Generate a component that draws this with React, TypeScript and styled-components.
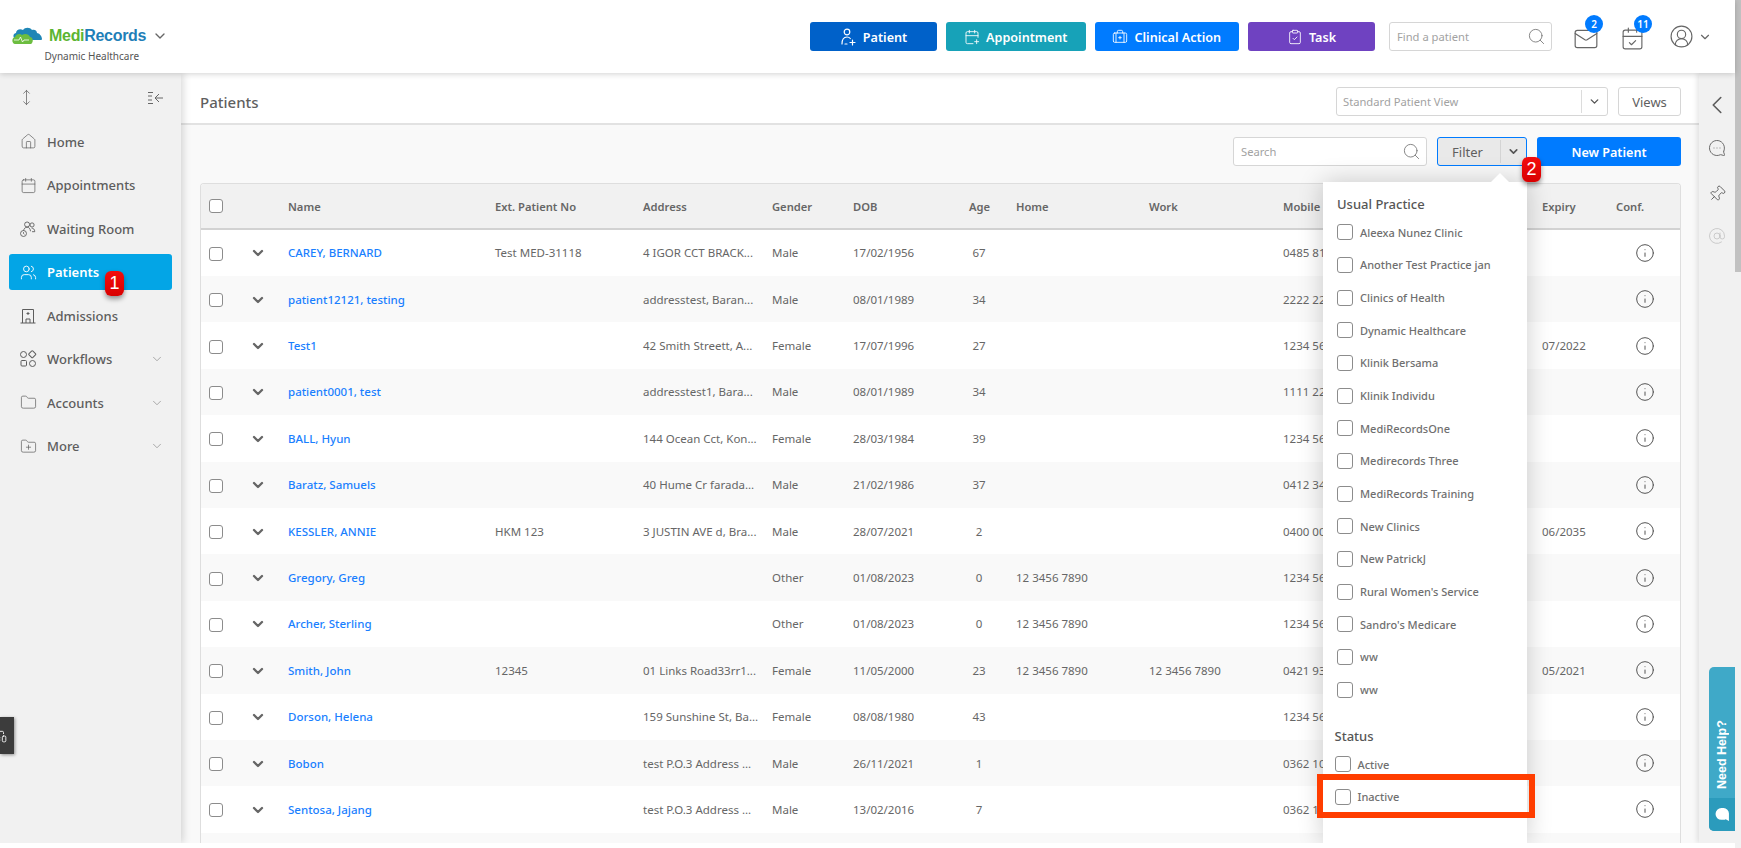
import React from 'react'
import styled, { createGlobalStyle } from 'styled-components'
import {
  AtSign,
  BriefcaseMedical,
  Calendar,
  CalendarCheck,
  CalendarPlus,
  ChevronDown,
  ChevronLeft,
  CircleUserRound,
  ClipboardCheck,
  Folder,
  FolderPlus,
  Home,
  Info,
  Mail,
  MessageCircleMore,
  MonitorSmartphone,
  MoveVertical,
  Pin,
  Search,
  Users,
} from 'lucide-react'

const GlobalStyle = createGlobalStyle`
  html, body { margin: 0; padding: 0; background: #fff; overflow: hidden; }
  body { font-family: "Noto Sans", "Open Sans", sans-serif; color: #5f5f5f; }
  * { box-sizing: border-box; }
`

const COLUMNS = '40px 39px 207px 148px 129px 81px 116px 47px 133px 134px 259px 74px 65px'

const patients = [
  ['CAREY, BERNARD', 'Test MED-31118', '4 IGOR CCT BRACK...', 'Male', '17/02/1956', '67', '', '', '0485 81', ''],
  ['patient12121, testing', '', 'addresstest, Baran...', 'Male', '08/01/1989', '34', '', '', '2222 22', ''],
  ['Test1', '', '42 Smith Streett, A...', 'Female', '17/07/1996', '27', '', '', '1234 56', '07/2022'],
  ['patient0001, test', '', 'addresstest1, Bara...', 'Male', '08/01/1989', '34', '', '', '1111 22', ''],
  ['BALL, Hyun', '', '144 Ocean Cct, Kon...', 'Female', '28/03/1984', '39', '', '', '1234 56', ''],
  ['Baratz, Samuels', '', '40 Hume Cr farada...', 'Male', '21/02/1986', '37', '', '', '0412 34', ''],
  ['KESSLER, ANNIE', 'HKM 123', '3 JUSTIN AVE d, Bra...', 'Male', '28/07/2021', '2', '', '', '0400 00', '06/2035'],
  ['Gregory, Greg', '', '', 'Other', '01/08/2023', '0', '12 3456 7890', '', '1234 56', ''],
  ['Archer, Sterling', '', '', 'Other', '01/08/2023', '0', '12 3456 7890', '', '1234 56', ''],
  ['Smith, John', '12345', '01 Links Road33rr1...', 'Female', '11/05/2000', '23', '12 3456 7890', '12 3456 7890', '0421 93', '05/2021'],
  ['Dorson, Helena', '', '159 Sunshine St, Ba...', 'Female', '08/08/1980', '43', '', '', '1234 56', ''],
  ['Bobon', '', 'test P.O.3 Address ...', 'Male', '26/11/2021', '1', '', '', '0362 10', ''],
  ['Sentosa, Jajang', '', 'test P.O.3 Address ...', 'Male', '13/02/2016', '7', '', '', '0362 1', ''],
]

const practices = [
  'Aleexa Nunez Clinic',
  'Another Test Practice jan',
  'Clinics of Health',
  'Dynamic Healthcare',
  'Klinik Bersama',
  'Klinik Individu',
  'MediRecordsOne',
  'Medirecords Three',
  'MediRecords Training',
  'New Clinics',
  'New PatrickJ',
  "Rural Women's Service",
  "Sandro's Medicare",
  'ww',
  'ww',
]

const Shell = styled.div`
  position: relative;
  display: flex;
  width: 1741px;
  height: 848px;
  overflow: hidden;
  background: #fff;
`

const Page = styled.div`
  flex: 1;
  min-width: 0;
  height: 843px;
  display: flex;
  flex-direction: column;
`

const ScrollTrack = styled.div`
  width: 6px;
  height: 848px;
  background: #f1f1f1;
`

const ScrollThumb = styled.div`
  height: 272px;
  background: #c1c1c1;
`

const Header = styled.header`
  position: relative;
  z-index: 5;
  height: 73px;
  flex: none;
  display: flex;
  align-items: center;
  padding: 0 23px 0 10px;
  background: #fff;
  box-shadow: 0 1px 6px rgba(0, 0, 0, 0.18);
`

const Brand = styled.div`
  display: flex;
  flex-direction: column;
  margin-top: 13px;
`

const BrandRow = styled.div`
  display: flex;
  align-items: center;
  height: 24px;
`

const BrandName = styled.span`
  margin-left: 6px;
  font-family: "Liberation Sans", Arial, sans-serif;
  font-size: 16px;
  font-weight: 700;
  letter-spacing: -0.3px;
  color: #1f7fb8;
  b { color: #5cb531; font-weight: 700; }
`

const BrandCaret = styled.span`
  display: flex;
  margin-left: 6px;
  color: #666;
`

const BrandSub = styled.span`
  margin: 1px 0 0 34.5px;
  font-size: 10px;
  line-height: 14px;
  color: #555;
`

const ActionGroup = styled.div`
  margin-left: auto;
  display: flex;
  gap: 9px;
`

const ActionButton = styled.button<{ $bg: string; $w: number }>`
  width: ${(p) => p.$w}px;
  height: 29px;
  display: flex;
  align-items: center;
  justify-content: center;
  gap: 6px;
  border: 0;
  border-radius: 3px;
  padding: 1px 0 0;
  background: ${(p) => p.$bg};
  color: #fff;
  font-family: inherit;
  font-size: 12.6px;
  font-weight: 600;
`

const SearchBox = styled.div<{ $w: number }>`
  width: ${(p) => p.$w}px;
  height: 29px;
  display: flex;
  align-items: center;
  justify-content: space-between;
  padding: 0 5px 0 7px;
  background: #fff;
  border: 1px solid #d6d6d6;
  border-radius: 3px;
  font-size: 11.2px;
  color: #a2a2a2;
  svg { color: #777; }
`

const FindBox = styled(SearchBox)`
  margin-left: 14px;
`

const HeaderIcon = styled.div<{ $ml: number; $badgeLeft: number }>`
  position: relative;
  display: flex;
  margin-left: ${(p) => p.$ml}px;
  margin-top: 4px;
  color: #666;
  span { left: ${(p) => p.$badgeLeft}px; }
`

const CountBadge = styled.span`
  position: absolute;
  top: -11px;
  width: 18px;
  height: 18px;
  border-radius: 50%;
  display: flex;
  align-items: center;
  justify-content: center;
  background: #007bff;
  color: #fff;
  font-size: 10px;
  font-weight: 600;
`

const UserMenu = styled.div`
  display: flex;
  align-items: center;
  gap: 4px;
  margin-left: 24px;
  color: #666;
`

const Body = styled.div`
  flex: 1;
  min-height: 0;
  display: flex;
  overflow: hidden;
`

const Sidebar = styled.aside`
  position: relative;
  z-index: 3;
  width: 181px;
  flex: none;
  padding: 0 9px;
  background: #f1f1f1;
  box-shadow: 2px 0 8px rgba(0, 0, 0, 0.16);
`

const SideTop = styled.div`
  height: 50.5px;
  display: flex;
  align-items: center;
  justify-content: space-between;
  padding: 0 8px 1px 9px;
  color: #666;
`

const SideNav = styled.nav`
  display: flex;
  flex-direction: column;
  gap: 7.5px;
`

const NavItem = styled.div<{ $active?: boolean }>`
  position: relative;
  height: 36px;
  display: flex;
  align-items: center;
  gap: 10px;
  padding: 0 8px 0 10px;
  border-radius: 3px;
  background: ${(p) => (p.$active ? '#03a5e6' : 'transparent')};
  color: ${(p) => (p.$active ? '#fff' : '#5d5d5d')};
  font-size: 13px;
  font-weight: ${(p) => (p.$active ? 600 : 500)};
`

const NavIcon = styled.span`
  width: 18px;
  flex: none;
  display: flex;
  justify-content: center;
`

const NavCaret = styled.span`
  display: flex;
  margin-left: auto;
  color: #8a8a8a;
`

const Marker = styled.span`
  position: absolute;
  z-index: 9;
  width: 19px;
  height: 25px;
  display: flex;
  align-items: center;
  justify-content: center;
  border-radius: 6px;
  background: linear-gradient(#f40d0d, #d80000);
  box-shadow: 0 3px 5px rgba(0, 0, 0, 0.4);
  color: #fff;
  font-family: "Liberation Sans", Arial, sans-serif;
  font-size: 18px;
  font-weight: 400;
`

const PatientsMarker = styled(Marker)`
  left: 96px;
  top: 17px;
`

const FilterMarker = styled(Marker)`
  left: 85px;
  top: 20px;
`

const DeviceTab = styled.div`
  position: absolute;
  left: 0;
  top: 644px;
  width: 14px;
  height: 37px;
  display: flex;
  align-items: center;
  overflow: hidden;
  background: #3c3c3c;
  box-shadow: 1px 1px 3px rgba(0, 0, 0, 0.4);
  color: #fff;
  svg { flex: none; margin-left: -7px; }
`

const Main = styled.main`
  flex: 1;
  min-width: 0;
  display: flex;
  flex-direction: column;
  background: #f9f9f9;
`

const PageHead = styled.div`
  height: 52px;
  flex: none;
  display: flex;
  align-items: center;
  padding: 7px 18px 0 19px;
  background: #fff;
  border-bottom: 2px solid #e2e2e2;
`

const PageTitle = styled.h1`
  margin: 0 auto 0 0;
  font-size: 15px;
  font-weight: 500;
  color: #5f5f5f;
`

const ViewSelect = styled.div`
  width: 272px;
  height: 29px;
  display: flex;
  align-items: center;
  border: 1px solid #d6d6d6;
  border-radius: 3px;
  background: #fff;
  font-size: 11.2px;
  color: #a2a2a2;
`

const ViewLabel = styled.span`
  flex: 1;
  padding-left: 6px;
`

const ViewCaret = styled.span`
  width: 26px;
  height: 23px;
  display: flex;
  align-items: center;
  justify-content: center;
  border-left: 1px solid #dcdcdc;
  color: #555;
`

const ViewsButton = styled.button`
  width: 63px;
  height: 29px;
  margin-left: 10px;
  padding: 0;
  border: 1px solid #d6d6d6;
  border-radius: 3px;
  background: #fff;
  color: #5f5f5f;
  font-family: inherit;
  font-size: 13px;
`

const Toolbar = styled.div`
  height: 58px;
  flex: none;
  display: flex;
  justify-content: flex-end;
  gap: 10px;
  padding: 12px 18px 0 0;
`

const FilterWrap = styled.div`
  position: relative;
  z-index: 4;
  width: 90px;
  height: 29px;
`

const FilterButton = styled.div`
  height: 29px;
  display: flex;
  align-items: center;
  border: 1px solid #007bff;
  border-radius: 3px;
  background: #e9e9e9;
  font-size: 13px;
  color: #5f5f5f;
`

const FilterLabel = styled.span`
  flex: 1;
  text-align: center;
  padding-right: 3px;
`

const FilterCaret = styled.span`
  width: 26px;
  height: 23px;
  display: flex;
  align-items: center;
  justify-content: center;
  border-left: 1px solid #d4d4d4;
  color: #555;
`

const NewButton = styled.button`
  width: 144px;
  height: 29px;
  padding: 1px 0 0;
  border: 0;
  border-radius: 3px;
  background: #007bff;
  color: #fff;
  font-family: inherit;
  font-size: 12.6px;
  font-weight: 600;
`

const Dropdown = styled.div`
  position: absolute;
  top: 45px;
  right: 0;
  width: 204px;
  height: 661px;
  padding: 11px 0 0 14px;
  background: #fff;
  box-shadow: 0 0 24px rgba(0, 0, 0, 0.2);
  &::before {
    content: '';
    position: absolute;
    top: -9px;
    left: 167px;
    border-left: 10px solid transparent;
    border-right: 10px solid transparent;
    border-bottom: 10px solid #fff;
  }
`

const GroupTitle = styled.div`
  height: 22px;
  line-height: 22px;
  margin-bottom: 1px;
  font-size: 13px;
  font-weight: 500;
  color: #565656;
`

const StatusGroup = styled.div`
  margin: 19px 0 0 -2.5px;
`

const CheckRow = styled.label`
  height: 32.67px;
  display: flex;
  align-items: center;
  gap: 7px;
  font-size: 11px;
  font-weight: 500;
  color: #6f6f6f;
`

const Box = styled.span<{ $size?: number }>`
  width: ${(p) => p.$size ?? 16}px;
  height: ${(p) => p.$size ?? 16}px;
  flex: none;
  display: block;
  background: #fff;
  border: 1.5px solid #8c8c8c;
  border-radius: 3px;
`

const RowBox = styled(Box)`
  margin-top: 2px;
`

const Highlight = styled.div`
  position: absolute;
  left: -6px;
  top: 592px;
  width: 218px;
  height: 44px;
  border: 6px solid #ff3d00;
`

const TableWrap = styled.div`
  flex: 1;
  min-height: 0;
  margin: 0 18px 0 19px;
  border: 1px solid #dedede;
  border-bottom: 0;
  border-radius: 4px 4px 0 0;
  overflow: hidden;
  background: #fff;
`

const HeadRow = styled.div`
  height: 45.6px;
  display: grid;
  grid-template-columns: ${COLUMNS};
  align-items: center;
  margin-left: -1px;
  padding: 1px 0 0 9px;
  background: #f1f1f1;
  border-bottom: 2px solid #d2d2d2;
  font-size: 11.2px;
  font-weight: 600;
  color: #666;
`

const DataRow = styled.div`
  height: 46.4px;
  display: grid;
  grid-template-columns: ${COLUMNS};
  align-items: center;
  margin-left: -1px;
  padding-left: 9px;
  background: #fff;
  font-size: 11.5px;
  color: #666;
  &:nth-child(even) { background: #f9f9f9; }
`

const NameLink = styled.a`
  color: #1a7fff;
  font-weight: 500;
`

const Centered = styled.span`
  width: 20px;
  text-align: center;
`

const RowCaret = styled.span`
  display: flex;
  margin: 1px 0 0 1px;
  color: #666;
`

const ConfIcon = styled.span`
  display: flex;
  padding-left: 19px;
  color: #555;
`

const Rail = styled.aside`
  position: relative;
  z-index: 2;
  width: 36px;
  flex: none;
  display: flex;
  flex-direction: column;
  align-items: center;
  gap: 26px;
  padding-top: 17px;
  background: #f1f1f1;
  box-shadow: -2px 0 5px rgba(0, 0, 0, 0.1);
  color: #5c5c5c;
`

const RailToggle = styled.span`
  display: flex;
  margin-bottom: -7px;
`

const RailChat = styled.span`
  display: flex;
  transform: scaleX(-1);
`

const RailPin = styled.span`
  display: flex;
  margin: 2px 0 -2px;
  transform: rotate(45deg);
`

const HelpTab = styled.div`
  position: absolute;
  right: 6px;
  bottom: 17px;
  z-index: 6;
  width: 26px;
  height: 164px;
  display: flex;
  flex-direction: column;
  border-radius: 5px 0 0 5px;
  overflow: hidden;
  background: #3fa9c8;
  color: #fff;
`

const HelpLabel = styled.div`
  flex: 1;
  display: flex;
  align-items: center;
  justify-content: flex-start;
  padding-top: 9px;
  writing-mode: vertical-rl;
  transform: rotate(180deg);
  font-family: "Liberation Sans", Arial, sans-serif;
  font-size: 12.5px;
  font-weight: 700;
`

const HelpIcon = styled.div`
  height: 33px;
  display: flex;
  align-items: center;
  justify-content: center;
  background: #2b9bbc;
`

const LogoMark = () => (
  <svg width="33" height="20" viewBox="0 0 33 20">
    <path d="M7 13C3 13 2 8 6 7c0-3 4-5 7-3 2-3 7-3 9 0 3-1 5 1 5 3 2 0 5 3 5 6 0 1-1 1-2 1H7z" fill="#1f86b6" />
    <path d="M5 18c-3 0-4-6 0-7 1-3 5-4 7-2 3-2 7-1 8 2 3 0 4 5 1 7H5z" fill="#6cbd3f" />
    <path d="M4 14h5l1.5-3 2 5 1.5-2h5" fill="none" stroke="#fff" strokeWidth="0.8" />
  </svg>
)

const PersonPlus = () => (
  <svg width="17" height="18" viewBox="0 0 17 18" fill="none" stroke="currentColor" strokeWidth="1.2" strokeLinecap="round">
    <circle cx="7" cy="4" r="2.8" />
    <path d="M2 16c0-4 1.5-7 5-7 1.5 0 2.5.5 3.3 1.5M5 16h2M12.5 12v5M10 14.5h5" />
  </svg>
)

const WaitingIcon = () => (
  <svg width="20" height="20" viewBox="0 0 20 20" fill="none" stroke="currentColor" strokeWidth="1">
    <circle cx="9" cy="5" r="2.8" />
    <circle cx="14.5" cy="5.5" r="2.3" />
    <path d="M5 12c.5-2.5 2-4 4-4s3.5 1.5 3.8 4.5M14 9c2 0 3.5 1.5 3.5 4h-3" />
    <circle cx="5" cy="15" r="3.3" />
    <path d="M5 13.5V15l1 .8" />
  </svg>
)

const HospitalIcon = () => (
  <svg width="18" height="18" viewBox="0 0 18 18" fill="none" stroke="currentColor" strokeWidth="1">
    <path d="M3.5 16V2.5h11V16M1.5 16h15M7 16v-4h4v4M9 5v3M7.5 6.5h3" />
  </svg>
)

const FlowIcon = () => (
  <svg width="18" height="18" viewBox="0 0 18 18" fill="none" stroke="currentColor" strokeWidth="1">
    <circle cx="4.5" cy="4.5" r="3" />
    <rect x="10.5" y="1.5" width="5.5" height="5.5" rx="1" transform="rotate(45 13.25 4.25)" />
    <rect x="2" y="10.5" width="5.5" height="5.5" rx="1" />
    <circle cx="13.5" cy="13.5" r="3" />
  </svg>
)

const CollapseIcon = () => (
  <svg width="17" height="14" viewBox="0 0 17 14" fill="none" stroke="currentColor" strokeWidth="1">
    <path d="M1 1.5h5M1 5h4M1 9h4M1 12.5h5M16 7H8.5M12 3L8 7l4 4" />
  </svg>
)

const ChatBubble = () => (
  <svg width="15" height="15" viewBox="0 0 14 14" fill="#fff">
    <path d="M6 1h2a5 5 0 0 1 5 5v7l-3-1.5A5 5 0 0 1 8 12H6A5.5 5.5 0 0 1 6 1z" />
  </svg>
)

export default function App() {
  const navItems = [
    { label: 'Home', icon: <Home size={17} strokeWidth={1} /> },
    { label: 'Appointments', icon: <Calendar size={17} strokeWidth={1} /> },
    { label: 'Waiting Room', icon: <WaitingIcon /> },
    { label: 'Patients', icon: <Users size={17} strokeWidth={1.3} />, active: true },
    { label: 'Admissions', icon: <HospitalIcon /> },
    { label: 'Workflows', icon: <FlowIcon />, caret: true },
    { label: 'Accounts', icon: <Folder size={17} strokeWidth={1} />, caret: true },
    { label: 'More', icon: <FolderPlus size={17} strokeWidth={1} />, caret: true },
  ]

  return (
    <Shell>
      <GlobalStyle />
      <Page>
        <Header>
          <Brand>
            <BrandRow>
              <LogoMark />
              <BrandName>
                <b>Medi</b>Records
              </BrandName>
              <BrandCaret>
                <ChevronDown size={16} strokeWidth={2} />
              </BrandCaret>
            </BrandRow>
            <BrandSub>Dynamic Healthcare</BrandSub>
          </Brand>
          <ActionGroup>
            <ActionButton $bg="#0061c9" $w={127}>
              <PersonPlus />
              Patient
            </ActionButton>
            <ActionButton $bg="#17a2b8" $w={139.5}>
              <CalendarPlus size={16} strokeWidth={1.3} />
              Appointment
            </ActionButton>
            <ActionButton $bg="#007bff" $w={144.5}>
              <BriefcaseMedical size={16} strokeWidth={1.3} />
              Clinical Action
            </ActionButton>
            <ActionButton $bg="#6f42c1" $w={127}>
              <ClipboardCheck size={16} strokeWidth={1.3} />
              Task
            </ActionButton>
          </ActionGroup>
          <FindBox $w={163}>
            Find a patient
            <Search size={19} strokeWidth={1.1} />
          </FindBox>
          <HeaderIcon $ml={21} $badgeLeft={12}>
            <Mail size={26} strokeWidth={1.1} />
            <CountBadge>2</CountBadge>
          </HeaderIcon>
          <HeaderIcon $ml={21} $badgeLeft={14}>
            <CalendarCheck size={25} strokeWidth={1.1} />
            <CountBadge>11</CountBadge>
          </HeaderIcon>
          <UserMenu>
            <CircleUserRound size={25} strokeWidth={1.1} />
            <ChevronDown size={14} strokeWidth={2} />
          </UserMenu>
        </Header>
        <Body>
          <Sidebar>
            <SideTop>
              <MoveVertical size={17} strokeWidth={1.1} />
              <CollapseIcon />
            </SideTop>
            <SideNav>
              {navItems.map((item) => (
                <NavItem key={item.label} $active={item.active}>
                  <NavIcon>{item.icon}</NavIcon>
                  {item.label}
                  {item.caret && (
                    <NavCaret>
                      <ChevronDown size={14} strokeWidth={1.2} />
                    </NavCaret>
                  )}
                  {item.active && <PatientsMarker>1</PatientsMarker>}
                </NavItem>
              ))}
            </SideNav>
            <DeviceTab>
              <MonitorSmartphone size={14} strokeWidth={1.5} />
            </DeviceTab>
          </Sidebar>
          <Main>
            <PageHead>
              <PageTitle>Patients</PageTitle>
              <ViewSelect>
                <ViewLabel>Standard Patient View</ViewLabel>
                <ViewCaret>
                  <ChevronDown size={13} strokeWidth={2.5} />
                </ViewCaret>
              </ViewSelect>
              <ViewsButton>Views</ViewsButton>
            </PageHead>
            <Toolbar>
              <SearchBox $w={194}>
                Search
                <Search size={19} strokeWidth={1.1} />
              </SearchBox>
              <FilterWrap>
                <FilterButton>
                  <FilterLabel>Filter</FilterLabel>
                  <FilterCaret>
                    <ChevronDown size={13} strokeWidth={3} />
                  </FilterCaret>
                </FilterButton>
                <FilterMarker>2</FilterMarker>
                <Dropdown>
                  <GroupTitle>Usual Practice</GroupTitle>
                  {practices.map((name, i) => (
                    <CheckRow key={name + i}>
                      <Box />
                      {name}
                    </CheckRow>
                  ))}
                  <StatusGroup>
                    <GroupTitle>Status</GroupTitle>
                    <CheckRow>
                      <Box />
                      Active
                    </CheckRow>
                    <CheckRow>
                      <Box />
                      Inactive
                    </CheckRow>
                  </StatusGroup>
                  <Highlight />
                </Dropdown>
              </FilterWrap>
              <NewButton>New Patient</NewButton>
            </Toolbar>
            <TableWrap>
              <HeadRow>
                <Box $size={14} />
                <span />
                <span>Name</span>
                <span>Ext. Patient No</span>
                <span>Address</span>
                <span>Gender</span>
                <span>DOB</span>
                <Centered>Age</Centered>
                <span>Home</span>
                <span>Work</span>
                <span>Mobile</span>
                <span>Expiry</span>
                <span>Conf.</span>
              </HeadRow>
              <div>
                {patients.map((row) => (
                  <DataRow key={row[0]}>
                    <RowBox $size={14} />
                    <RowCaret>
                      <ChevronDown size={16} strokeWidth={3.5} />
                    </RowCaret>
                    <NameLink>{row[0]}</NameLink>
                    <span>{row[1]}</span>
                    <span>{row[2]}</span>
                    <span>{row[3]}</span>
                    <span>{row[4]}</span>
                    <Centered>{row[5]}</Centered>
                    <span>{row[6]}</span>
                    <span>{row[7]}</span>
                    <span>{row[8]}</span>
                    <span>{row[9]}</span>
                    <ConfIcon>
                      <Info size={20} strokeWidth={1.2} />
                    </ConfIcon>
                  </DataRow>
                ))}
                <DataRow />
              </div>
            </TableWrap>
          </Main>
          <Rail>
            <RailToggle>
              <ChevronLeft size={30} strokeWidth={1.3} />
            </RailToggle>
            <RailChat>
              <MessageCircleMore size={18} strokeWidth={1.2} />
            </RailChat>
            <RailPin>
              <Pin size={18} strokeWidth={1.2} />
            </RailPin>
            <AtSign size={18} strokeWidth={1.1} color="#c2c2c2" />
          </Rail>
        </Body>
      </Page>
      <ScrollTrack>
        <ScrollThumb />
      </ScrollTrack>
      <HelpTab>
        <HelpLabel>Need Help?</HelpLabel>
        <HelpIcon>
          <ChatBubble />
        </HelpIcon>
      </HelpTab>
    </Shell>
  )
}
